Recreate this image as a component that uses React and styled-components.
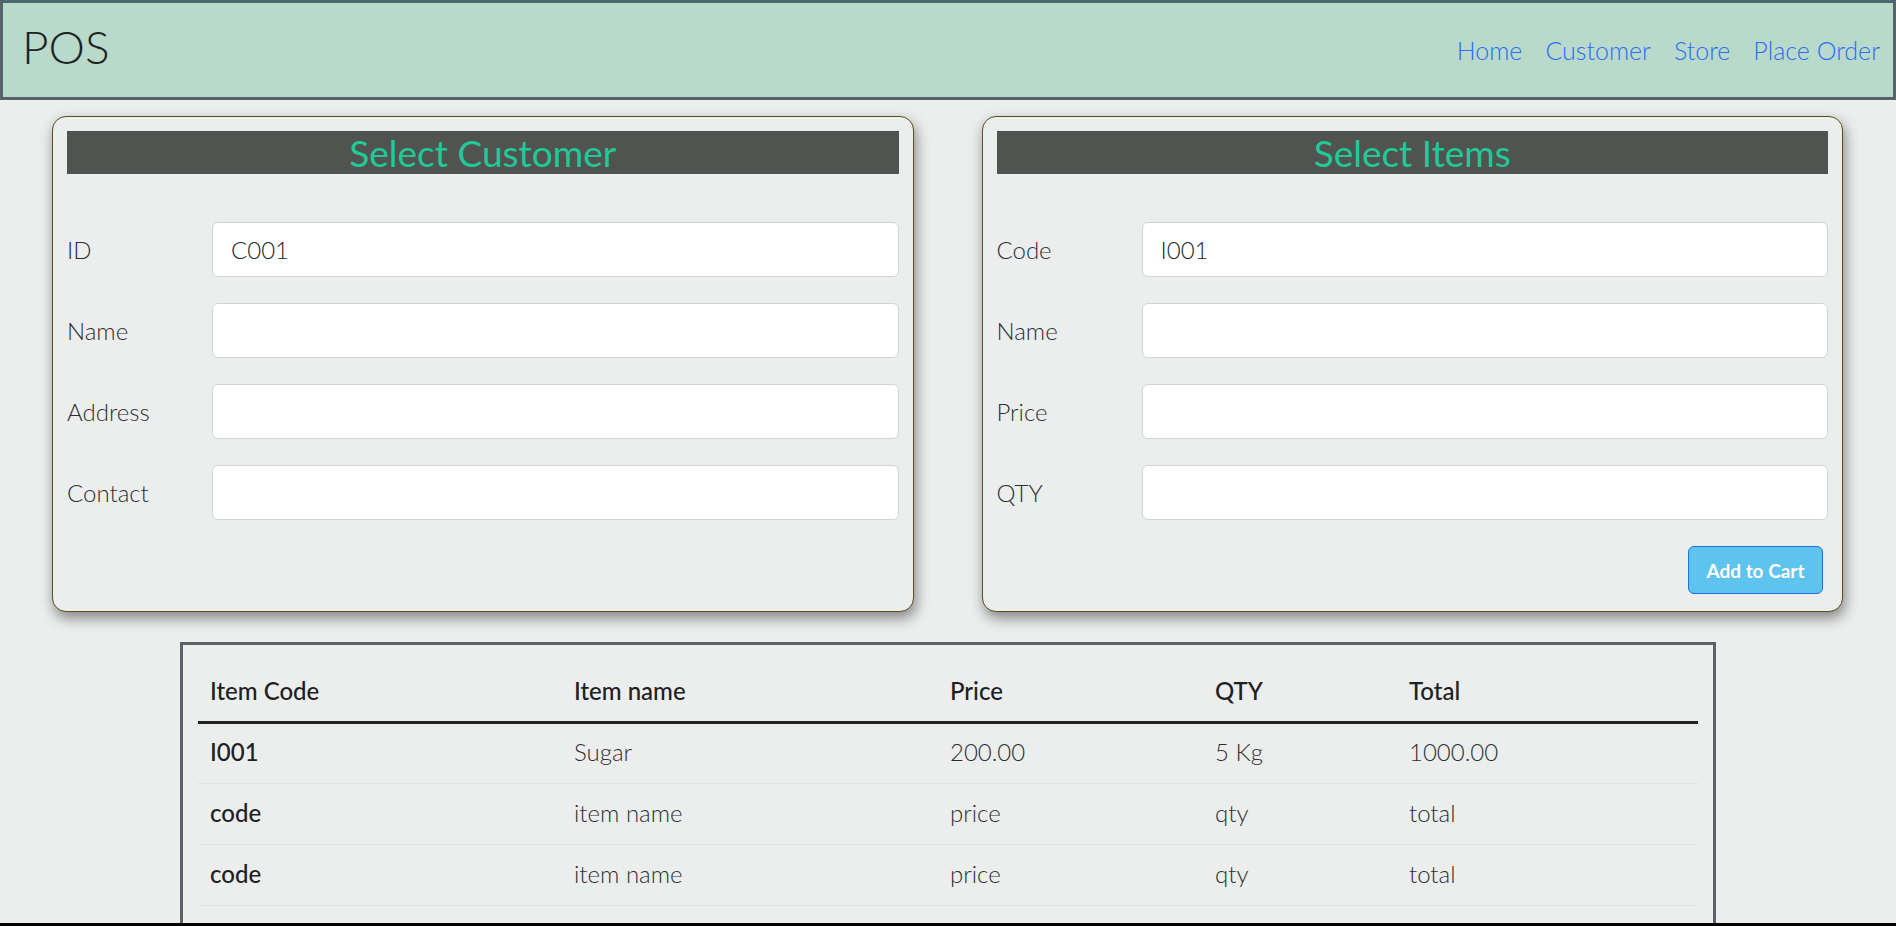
import React from "react";
import styled, { createGlobalStyle } from "styled-components";

const GlobalStyle = createGlobalStyle`
  * { box-sizing: border-box; }
  body {
    margin: 0;
    background: #eceeed;
    font-family: Lato, "Open Sans", sans-serif;
    color: #212529;
  }
`;

const Frame = styled.div`
  height: 100vh;
  overflow: hidden;
  border-bottom: 3px solid #000;
`;

const Header = styled.header`
  height: 100px;
  display: flex;
  align-items: center;
  justify-content: space-between;
  padding: 0 13px 0 19px;
  background: #b9d9cb;
  border: 3px solid #56636a;
  border-top-color: #4b6870;
`;

const Brand = styled.h1`
  margin: 0 0 8px;
  font-size: 46px;
  font-weight: 300;
  color: #1d2522;
`;

const Nav = styled.nav`
  display: flex;
  gap: 23px;
`;

const NavLink = styled.a`
  font-size: 25px;
  font-weight: 300;
  color: #2a6df4;
  text-decoration: none;
  cursor: pointer;
`;

const Cards = styled.section`
  display: grid;
  grid-template-columns: 1fr 1fr;
  gap: 68px;
  padding: 16px 53px 0 52px;
`;

const Card = styled.div`
  display: flex;
  flex-direction: column;
  padding: 14px 14px 17px;
  background: #eceeed;
  border: 1px solid #5e4d17;
  border-radius: 14px;
  box-shadow: 2px 6px 14px rgba(0, 0, 0, 0.45);
`;

const CardTitle = styled.h2`
  margin: 0 0 48px;
  height: 43px;
  line-height: 43px;
  background: #515351;
  color: #20c997;
  font-size: 37px;
  font-weight: 400;
  text-align: center;
`;

const Form = styled.div`
  display: grid;
  grid-template-columns: 145px 1fr;
  row-gap: 26px;
  align-items: center;
`;

const Label = styled.label`
  font-size: 24px;
  font-weight: 300;
  color: #2b2f33;
`;

const Input = styled.input`
  height: 55px;
  width: 100%;
  padding: 0 18px;
  border: 1px solid #ced4da;
  border-radius: 6px;
  background: #fff;
  font-family: inherit;
  font-size: 24px;
  font-weight: 300;
  color: #212529;
  outline: none;
`;

const Actions = styled.div`
  display: flex;
  justify-content: flex-end;
  margin-top: 26px;
  padding-right: 5px;
`;

const Button = styled.button`
  width: 135px;
  height: 48px;
  border: 1px solid #1f6feb;
  border-radius: 6px;
  background: #5ec4ee;
  color: #fff;
  font-family: inherit;
  font-size: 19px;
  font-weight: 700;
  cursor: pointer;
`;

const TableBox = styled.div`
  width: 1536px;
  margin: 30px auto 0;
  padding: 15px 15px 48px;
  border: 3px solid #5a6168;
`;

const Table = styled.table`
  width: 100%;
  border-collapse: collapse;
`;

const Th = styled.th`
  width: ${(p) => p.w || "auto"};
  height: ${(p) => (p.head ? "62px" : "61px")};
  padding: ${(p) => (p.head ? "0 12px" : "0 12px 3px")};
  text-align: left;
  font-size: 24px;
  font-weight: 500;
  color: #1d2124;
  border-bottom: ${(p) => (p.head ? "3px solid #222" : "1px solid #dee2e6")};
`;

const Td = styled.td`
  height: 61px;
  padding: 0 12px 3px;
  font-size: 24px;
  font-weight: 300;
  color: #2b2f33;
  border-bottom: 1px solid #dee2e6;
`;

const customerFields = [
  { label: "ID", value: "C001" },
  { label: "Name", value: "" },
  { label: "Address", value: "" },
  { label: "Contact", value: "" },
];

const itemFields = [
  { label: "Code", value: "I001" },
  { label: "Name", value: "" },
  { label: "Price", value: "" },
  { label: "QTY", value: "" },
];

const columns = [
  { name: "Item Code", w: "364px" },
  { name: "Item name", w: "376px" },
  { name: "Price", w: "265px" },
  { name: "QTY", w: "194px" },
  { name: "Total" },
];

const rows = [
  ["I001", "Sugar", "200.00", "5 Kg", "1000.00"],
  ["code", "item name", "price", "qty", "total"],
  ["code", "item name", "price", "qty", "total"],
];

function Fields({ list }) {
  return (
    <Form>
      {list.map((f) => (
        <React.Fragment key={f.label}>
          <Label>{f.label}</Label>
          <Input defaultValue={f.value} />
        </React.Fragment>
      ))}
    </Form>
  );
}

export default function App() {
  return (
    <Frame>
      <GlobalStyle />
      <Header>
        <Brand>POS</Brand>
        <Nav>
          <NavLink>Home</NavLink>
          <NavLink>Customer</NavLink>
          <NavLink>Store</NavLink>
          <NavLink>Place Order</NavLink>
        </Nav>
      </Header>

      <Cards>
        <Card>
          <CardTitle>Select Customer</CardTitle>
          <Fields list={customerFields} />
        </Card>
        <Card>
          <CardTitle>Select Items</CardTitle>
          <Fields list={itemFields} />
          <Actions>
            <Button>Add to Cart</Button>
          </Actions>
        </Card>
      </Cards>

      <TableBox>
        <Table>
          <thead>
            <tr>
              {columns.map((c) => (
                <Th head key={c.name} w={c.w}>
                  {c.name}
                </Th>
              ))}
            </tr>
          </thead>
          <tbody>
            {rows.map((r, i) => (
              <tr key={i}>
                <Th>{r[0]}</Th>
                {r.slice(1).map((v, j) => (
                  <Td key={j}>{v}</Td>
                ))}
              </tr>
            ))}
          </tbody>
        </Table>
      </TableBox>
    </Frame>
  );
}
